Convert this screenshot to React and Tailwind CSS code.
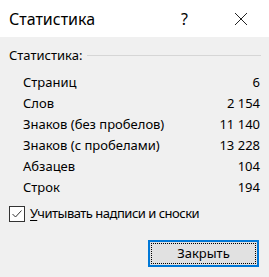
import React from "react";

const rows = [
  ["Страниц", "6"],
  ["Слов", "2 154"],
  ["Знаков (без пробелов)", "11 140"],
  ["Знаков (с пробелами)", "13 228"],
  ["Абзацев", "104"],
  ["Строк", "194"],
];

export default function App() {
  return (
    <div
      className="w-[269px] h-[277px] bg-[#f0f0f0] text-[#000] overflow-hidden"
      style={{ fontFamily: '"Noto Sans", "Open Sans", sans-serif' }}
    >
      <div className="h-[37px] bg-white flex items-center pl-[9px]">
        <span className="text-[16px] leading-none">Статистика</span>
        <span className="ml-auto text-[16px] leading-none w-[8px] mr-[45px]">?</span>
        <svg width="14" height="14" viewBox="0 0 14 14" className="mr-[21px]">
          <path d="M1 1 L13 13 M13 1 L1 13" stroke="#222" strokeWidth="1" fill="none" />
        </svg>
      </div>

      <div className="mt-[8px] h-[20px] flex items-center pl-[9px] pr-[8px] text-[13px]">
        <span className="leading-none">Статистика:</span>
        <div className="flex-1 h-px bg-[#d6d6d6] ml-[5px]"></div>
      </div>

      <div className="mt-[7px] text-[13px]">
        {rows.map(([label, value]) => (
          <div key={label} className="h-[21px] flex items-center pl-[23px] pr-[9px]">
            <span>{label}</span>
            <span className="ml-auto">{value}</span>
          </div>
        ))}
      </div>

      <div className="mt-[8px] h-[16px] flex items-center pl-[9px] text-[13px]">
        <div className="w-[16px] h-[16px] border border-[#333] bg-white flex items-center justify-center">
          <svg width="12" height="10" viewBox="0 0 12 10">
            <path d="M1.5 5 L4.5 8 L10.5 1.5" stroke="#333" strokeWidth="1" fill="none" />
          </svg>
        </div>
        <span className="ml-[5px] tracking-[-0.5px]">
          <span className="underline underline-offset-2">У</span>читывать надписи и сноски
        </span>
      </div>

      <div className="mt-[18px] flex justify-end pr-[10px]">
        <button className="w-[111px] h-[27px] border-2 border-[#0078d7] bg-[#e1e1e1] p-[1px] text-[13px]">
          <div className="w-full h-full border border-dotted border-black flex items-center justify-center">
            Закрыть
          </div>
        </button>
      </div>
    </div>
  );
}
